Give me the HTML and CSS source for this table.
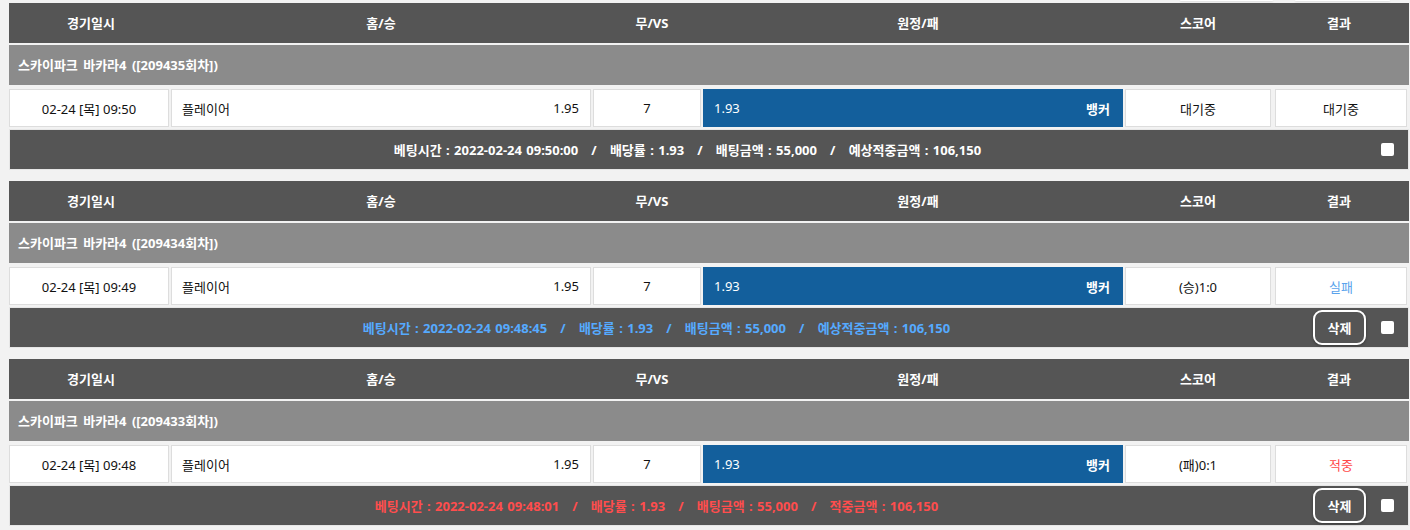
FILE: index.html
```html
<!DOCTYPE html>
<html lang="ko">
<head>
<meta charset="utf-8">
<title>배팅내역</title>
<link rel="stylesheet" href="styles.css">
</head>
<body>
<div class="topbar"><span class="tb-btn tb-a"></span><span class="tb-btn tb-b"></span></div>
<div class="list">

  <section class="bet">
    <div class="head">
      <div class="c c1">경기일시</div>
      <div class="c c2">홈/승</div>
      <div class="c c3">무/VS</div>
      <div class="c c4">원정/패</div>
      <div class="c c5">스코어</div>
      <div class="c c6">결과</div>
    </div>
    <div class="title">스카이파크 바카라4 ([209435회차])</div>
    <div class="row">
      <div class="cell c1 center">02-24 [목] 09:50</div>
      <div class="cell c2 split"><span>플레이어</span><span>1.95</span></div>
      <div class="cell c3 center">7</div>
      <div class="cell c4 split pick"><span>1.93</span><span class="bold">뱅커</span></div>
      <div class="cell c5 center">대기중</div>
      <div class="cell c6 center">대기중</div>
    </div>
    <div class="foot">
      <div class="info">베팅시간 : 2022-02-24 09:50:00&nbsp;&nbsp;&nbsp;/&nbsp;&nbsp;&nbsp;배당률 : 1.93&nbsp;&nbsp;&nbsp;/&nbsp;&nbsp;&nbsp;배팅금액 : 55,000&nbsp;&nbsp;&nbsp;/&nbsp;&nbsp;&nbsp;예상적중금액 : 106,150</div>
      <div class="act"><input type="checkbox" class="chk"></div>
    </div>
  </section>

  <section class="bet">
    <div class="head">
      <div class="c c1">경기일시</div>
      <div class="c c2">홈/승</div>
      <div class="c c3">무/VS</div>
      <div class="c c4">원정/패</div>
      <div class="c c5">스코어</div>
      <div class="c c6">결과</div>
    </div>
    <div class="title">스카이파크 바카라4 ([209434회차])</div>
    <div class="row">
      <div class="cell c1 center">02-24 [목] 09:49</div>
      <div class="cell c2 split"><span>플레이어</span><span>1.95</span></div>
      <div class="cell c3 center">7</div>
      <div class="cell c4 split pick"><span>1.93</span><span class="bold">뱅커</span></div>
      <div class="cell c5 center">(승)1:0</div>
      <div class="cell c6 center lose">실패</div>
    </div>
    <div class="foot">
      <div class="info info-lose">베팅시간 : 2022-02-24 09:48:45&nbsp;&nbsp;&nbsp;/&nbsp;&nbsp;&nbsp;배당률 : 1.93&nbsp;&nbsp;&nbsp;/&nbsp;&nbsp;&nbsp;배팅금액 : 55,000&nbsp;&nbsp;&nbsp;/&nbsp;&nbsp;&nbsp;예상적중금액 : 106,150</div>
      <div class="act"><button class="del">삭제</button><input type="checkbox" class="chk"></div>
    </div>
  </section>

  <section class="bet">
    <div class="head">
      <div class="c c1">경기일시</div>
      <div class="c c2">홈/승</div>
      <div class="c c3">무/VS</div>
      <div class="c c4">원정/패</div>
      <div class="c c5">스코어</div>
      <div class="c c6">결과</div>
    </div>
    <div class="title">스카이파크 바카라4 ([209433회차])</div>
    <div class="row">
      <div class="cell c1 center">02-24 [목] 09:48</div>
      <div class="cell c2 split"><span>플레이어</span><span>1.95</span></div>
      <div class="cell c3 center">7</div>
      <div class="cell c4 split pick"><span>1.93</span><span class="bold">뱅커</span></div>
      <div class="cell c5 center">(패)0:1</div>
      <div class="cell c6 center win">적중</div>
    </div>
    <div class="foot">
      <div class="info info-win">베팅시간 : 2022-02-24 09:48:01&nbsp;&nbsp;&nbsp;/&nbsp;&nbsp;&nbsp;배당률 : 1.93&nbsp;&nbsp;&nbsp;/&nbsp;&nbsp;&nbsp;배팅금액 : 55,000&nbsp;&nbsp;&nbsp;/&nbsp;&nbsp;&nbsp;적중금액 : 106,150</div>
      <div class="act"><button class="del">삭제</button><input type="checkbox" class="chk"></div>
    </div>
  </section>

</div>
</body>
</html>
```

FILE: styles.css
```css
* { box-sizing: border-box; }

html, body {
  margin: 0;
  padding: 0;
  background: #f2f2f2;
}

body {
  font-family: "Noto Sans", "Noto Sans CJK KR", sans-serif;
  font-size: 13px;
  color: #111;
  width: 1410px;
  height: 530px;
  overflow: hidden;
}

.topbar {
  height: 3px;
  display: flex;
  justify-content: flex-end;
  align-items: flex-start;
  padding-right: 20px;
  gap: 22px;
}

.tb-btn {
  display: block;
  height: 1px;
  background: #fff;
  border-radius: 0 0 6px 6px;
  box-shadow: 0 1px 2px rgba(0, 0, 0, 0.12);
}
.tb-a { width: 93px; }
.tb-b { width: 95px; }

.list {
  padding-left: 9px;
  width: 1409px;
}

.bet {
  width: 1400px;
  margin-bottom: 11px;
}

.head {
  height: 40px;
  background: #555555;
  display: flex;
  align-items: center;
  gap: 2px;
  margin-bottom: 2px;
  color: #fff;
  font-weight: bold;
}

.head .c {
  text-align: center;
  line-height: 40px;
}

.c1 { width: 160px; }
.c2 { width: 420px; }
.c3 { width: 108px; }
.c4 { width: 420px; }
.c5 { width: 146px; }
.c6 { width: 132px; }

.head .c3, .head .c4 { padding-left: 10px; }
.head .c1 { padding-left: 4px; }

.title {
  height: 40px;
  line-height: 40px;
  background: #8b8b8b;
  color: #fff;
  font-weight: bold;
  padding-left: 9px;
  margin-bottom: 4px;
  word-spacing: 2px;
}

.row {
  height: 38px;
  display: flex;
  gap: 2px;
  margin-bottom: 2px;
}

.cell {
  height: 38px;
  background: #fff;
  border: 1px solid #dddddd;
  display: flex;
  align-items: center;
  color: #111;
}

.row .c6 { margin-left: 2px; }

.center { justify-content: center; }

.split {
  justify-content: space-between;
  padding: 0 11px 0 10px;
}

.pick {
  background: #135f9c;
  border-color: #135f9c;
  color: #fff;
  padding-right: 12px;
}

.bold { font-weight: bold; }

.lose { color: #5aa3ec; }
.win { color: #ff4a4a; }

.foot {
  height: 41px;
  background: #555555;
  border: 1px solid #e6e6e6;
  display: flex;
  align-items: center;
}

.info {
  flex: 1;
  text-align: center;
  color: #fff;
  font-weight: bold;
  white-space: nowrap;
  word-spacing: 1px;
}

.info-lose { color: #55aaff; }
.info-win { color: #ff4d4d; }

.act {
  display: flex;
  align-items: center;
  padding: 0 14px 0 1px;
}

.del {
  margin: 0 0 0 9px;
  width: 53px;
  height: 35px;
  background: #555555;
  border: 2px solid #fff;
  border-radius: 9px;
  color: #fff;
  font-family: inherit;
  font-size: 13px;
  font-weight: bold;
  padding: 0;
  box-shadow: 0 1px 3px rgba(0, 0, 0, 0.35);
}

.chk {
  appearance: none;
  -webkit-appearance: none;
  width: 13px;
  height: 13px;
  margin: 0 0 0 15px;
  background: #fff;
  border: none;
  border-radius: 2px;
}
```
